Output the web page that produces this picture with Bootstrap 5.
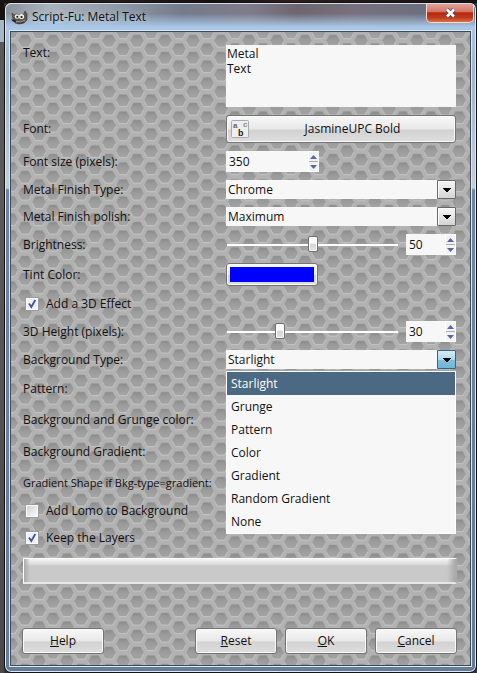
<!DOCTYPE html>
<html lang="en">
<head>
<meta charset="utf-8">
<meta name="viewport" content="width=device-width, initial-scale=1">
<title>Script-Fu: Metal Text</title>
<link href="https://cdn.jsdelivr.net/npm/bootstrap@5.3.0/dist/css/bootstrap.min.css" rel="stylesheet">
<style>
body{font:12px/16px "Open Sans","Noto Sans",sans-serif;color:#111;min-height:100vh;padding:2px 0 0 4px;
 background:linear-gradient(90deg,#1d1412,#281b18 25%,#15100f 45%,#2f1d19 60%,#161010) 0 0/100% 3px no-repeat,
 linear-gradient(#17110f 0 20px,#a9b7c2 20px 42px,#5b5a58 42px 190px,#4b4947) 0 0/4px 100% no-repeat,#333}
.win{border:1px solid #10141a;border-radius:7px;padding:0 5px 6px;
 background:linear-gradient(#a9c4df 0 30px,#a4b6c9 70px,#c3ced9 185px,#6e86a1 187px,#667b94);
 box-shadow:inset 0 0 0 1px #dbe8f2}
.titlebar{height:28px;margin:0 -4px;padding:0 1px 0 5px;border-radius:6px 6px 0 0;
 background:linear-gradient(transparent 35%,#a9c7e7 85%),linear-gradient(90deg,#8b9199,#a9b3bd 9%,#8e99a7 24%,#737b8b 38%,#7f7c89 52%,#6d6670 62%,#77717d 74%,#646d7d 100%);
 border-top:1px solid #d3dde6}
.logo{width:17px;height:15px;margin-top:6px}
.wintitle{font-size:12px;line-height:26px;margin:0 0 0 4px;font-weight:400;text-shadow:0 0 6px #fff9}
.closebtn{width:48px;height:19px;padding:0;border:1px solid #f2d9d4;border-top:0;border-radius:0 0 5px 5px;
 background:linear-gradient(#e2a296,#d07562 45%,#b8270f 48%,#bf3a1c 75%,#dd7146);display:flex;align-items:center;justify-content:center}
.pane{border:1px solid #3c4b5b;outline:1px solid #dce8f2;padding:13px 14px 11px 12px;
 background:#b2b2b2 url("data:image/svg+xml,%3Csvg xmlns='http://www.w3.org/2000/svg' width='28' height='17'%3E%3Cdefs%3E%3ClinearGradient id='g' x2='0' y2='1'%3E%3Cstop stop-color='%238b8b8b'/%3E%3Cstop offset='.4' stop-color='%239a9a9a'/%3E%3Cstop offset='1' stop-color='%23a4a4a4'/%3E%3C/linearGradient%3E%3Cg id='h'%3E%3Cpath d='M-6.5 1.500L-3.700 6.600H3.700L6.500 1.500' fill='none' stroke='%23c4c4c4'/%3E%3Cpath d='M-6.500 0L-3.500-5.600H3.500L6.500 0L3.500 5.600H-3.500Z' fill='url(%23g)' stroke='%239b9b9b' stroke-width='.5'/%3E%3C/g%3E%3C/defs%3E%3Cuse href='%23h' x='14' y='8.500'/%3E%3Cuse href='%23h' x='0' y='0'/%3E%3Cuse href='%23h' x='28' y='0'/%3E%3Cuse href='%23h' x='0' y='17'/%3E%3Cuse href='%23h' x='28' y='17'/%3E%3C/svg%3E") 0 0/28px 17px}
.rowline{display:grid;grid-template-columns:203px minmax(0,1fr);align-items:center;min-height:19px}
.h-text{min-height:62px}.h-font{min-height:28px}.h-spin{min-height:21px}.h-color{min-height:23px}.h-mid{min-height:24px}
.longlabel{font-size:11px;white-space:nowrap}
.tick-row{height:19px;padding-left:3px}
.field{background-color:#f7f7f7;border:0;border-radius:0;color:#111;font:inherit;outline:0;width:100%}
textarea.field{height:62px;line-height:15px;padding:1px;resize:none;display:block}
.gtkbtn{border:1px solid #747474;border-radius:3px;color:#111;font:inherit;padding:0;
 background:linear-gradient(#f8f8f8,#e8e8e8 50%,#d2d2d2 54%,#dedede);box-shadow:inset 0 0 0 1px #fafafa}
.fontbtn{height:28px;display:flex;align-items:center;width:100%}
.spin{display:flex;height:21px;width:50px;flex:none}
.spin.wide{width:93px}
.spin input{min-width:0;padding:0 3px;appearance:textfield}
.spin input::-webkit-inner-spin-button{display:none}
.steps{width:11px;flex:none;display:flex;flex-direction:column;gap:1px;background:#aaa;border:1px solid #fff}
.steps button{flex:1;border:0;background:#f2f2f2;padding:0;display:flex;align-items:center;justify-content:center}
.combo{height:19px;padding:0 20px 0 2px;appearance:none;background:#f7f7f7 url("data:image/svg+xml,%3Csvg xmlns='http://www.w3.org/2000/svg' width='19' height='19'%3E%3Cdefs%3E%3ClinearGradient id='a' x2='0' y2='1'%3E%3Cstop stop-color='%23f6f6f6'/%3E%3Cstop offset='1' stop-color='%23d3d3d3'/%3E%3C/linearGradient%3E%3C/defs%3E%3Cpath d='M.5.5h18v18H.5z' fill='url(%23a)' stroke='%23686868'/%3E%3Cpath d='M1.500 17.500V1.500h16' fill='none' stroke='%23fff'/%3E%3Cpath d='M6 8h8v1h-1v1h-1v1h-1v1H9v-1H8v-1H7V9H6z'/%3E%3C/svg%3E") right center no-repeat}
.combo.open{background-image:url("data:image/svg+xml,%3Csvg xmlns='http://www.w3.org/2000/svg' width='19' height='19'%3E%3Cdefs%3E%3ClinearGradient id='a' x2='0' y2='1'%3E%3Cstop stop-color='%23d8edf7'/%3E%3Cstop offset='.5' stop-color='%23a9d8ee'/%3E%3Cstop offset='.55' stop-color='%2380bfe0'/%3E%3Cstop offset='1' stop-color='%2370b4d8'/%3E%3C/linearGradient%3E%3C/defs%3E%3Cpath d='M.5.5h18v18H.5z' fill='url(%23a)' stroke='%23356580'/%3E%3Cpath d='M6 8h8v1h-1v1h-1v1h-1v1H9v-1H8v-1H7V9H6z'/%3E%3C/svg%3E")}
.slide{appearance:none;background:none;flex:1;min-width:0;height:18px;margin:0 8px 0 1px}
.slide::-webkit-slider-runnable-track{height:2px;background:#fff}
.slide::-webkit-slider-thumb{appearance:none;width:10px;height:16px;margin-top:-8px;border:1px solid #6f6f6f;border-radius:2px;background:linear-gradient(#fafafa 45%,#d4d4d4 50%,#e4e4e4);box-shadow:inset 0 0 0 1px #fff}
.swatch{appearance:none;width:92px;height:23px;padding:3px}
.swatch::-webkit-color-swatch-wrapper{padding:0}
.swatch::-webkit-color-swatch{border:0;border-radius:0}
.tick{appearance:none;flex:none;width:12px;height:12px;margin:0;border:1px solid #fff;outline:1px solid #999;background:linear-gradient(135deg,#d2d2d2,#fafafa)}
.tick:checked{background:url("data:image/svg+xml,%3Csvg xmlns='http://www.w3.org/2000/svg' viewBox='0 0 10 10'%3E%3Cpath d='M2 4.500L4.300 8L8.300 1' fill='none' stroke='%233f54a0' stroke-width='1.800'/%3E%3C/svg%3E"),#f0f1f8}
.choices{position:absolute;top:21px;left:0;right:0;z-index:5;border:1px solid #fff;border-radius:0;box-shadow:0 -1px #a3a3ab}
.choices button{height:23px;padding:0 4px;border:0;background:#f7f7f7;color:#111;font:inherit;text-align:left}
.choices .active{background:#4b6983;color:#fff}
.bar{height:26px;margin:11px -1px 0 0;border-radius:0;border:1px solid #fff;border-width:1px 2px 2px 1px;border-bottom-color:#e7e7e7;border-right-color:#aaa;
 background:linear-gradient(90deg,#aaa,transparent 6px,transparent calc(100% - 8px),#aaa),linear-gradient(#f4f4f4,#dcdcdc 5px,#c9c9c9 7px)}
.actions{margin:44px -1px 0}
.actions .gtkbtn{width:82px;height:26px}
</style>
</head>
<body>
<main class="win">
 <header class="titlebar d-flex align-items-start">
  <svg class="logo" viewBox="0 0 17 15" aria-hidden="true"><path d="M1 3l2 2 2-1 4 1 4-1 1-3 2 3v6l-3 3-5 1-4-1-2-4z" fill="#5c574c" stroke="#37342e" stroke-width=".6"/><circle cx="6" cy="6.500" r="2.300" fill="#eee"/><circle cx="10.500" cy="6.500" r="2.600" fill="#eee"/><circle cx="6.300" cy="6.800" r="1" fill="#111"/><circle cx="10.500" cy="7" r="1.100" fill="#111"/><path d="M0 9.500l4 .3 2 2.200-4-.5z" fill="#211e1b"/><path d="M4 11l5 1 5-2-2 3-4 1z" fill="#37342e"/><path d="M5 11.700l5 .3 4-2" stroke="#ccc" stroke-width=".7" fill="none"/></svg>
  <h1 class="wintitle flex-grow-1">Script-Fu: Metal Text</h1>
  <button class="closebtn" type="button" aria-label="Close"><svg width="13" height="12" viewBox="0 0 13 12"><path d="M3 2.500l7 7M10 2.500l-7 7" stroke="#4b4f65" stroke-width="4.400"/><path d="M3 2.500l7 7M10 2.500l-7 7" stroke="#fff" stroke-width="2.500"/></svg></button>
 </header>
 <form class="pane">
  <div class="d-grid gap-2">
   <div class="rowline h-text"><label for="txt" class="align-self-start">Text:</label><textarea id="txt" class="field">Metal
Text</textarea></div>
   <div class="rowline h-font"><label for="fnt">Font:</label>
    <button id="fnt" class="gtkbtn fontbtn" type="button"><svg class="ms-1 flex-shrink-0" width="19" height="19" viewBox="0 0 19 19" font-family="Liberation Sans" font-weight="bold" aria-hidden="true"><rect x=".5" y=".5" width="17" height="17" rx="1" fill="#eee" stroke="#aaa"/><text x="2" y="8" font-size="8" fill="#666">a</text><text x="12" y="7" font-size="8" fill="#888">c</text><text x="7" y="16" font-size="9" fill="#222">b</text></svg><span class="flex-grow-1">JasmineUPC Bold</span></button></div>
   <div class="rowline h-spin"><label for="size">Font size (pixels):</label>
    <div class="spin wide"><input id="size" class="field" type="number" value="350"><div class="steps"><button type="button" aria-label="Increase"><svg width="7" height="4"><path d="M0 4L3.500 0 7 4z" fill="#5965a5"/></svg></button><button type="button" aria-label="Decrease"><svg width="7" height="4"><path d="M0 0L3.500 4 7 0z" fill="#5965a5"/></svg></button></div></div></div>
   <div class="rowline"><label for="finish">Metal Finish Type:</label><select id="finish" class="field combo"><option>Chrome</option></select></div>
   <div class="rowline"><label for="polish">Metal Finish polish:</label><select id="polish" class="field combo"><option>Maximum</option></select></div>
   <div class="rowline h-spin"><label for="bright">Brightness:</label>
    <div class="d-flex align-items-center"><input id="bright" class="slide" type="range" value="50"><div class="spin"><input class="field" type="number" value="50" aria-label="Brightness value"><div class="steps"><button type="button" aria-label="Increase"><svg width="7" height="4"><path d="M0 4L3.500 0 7 4z" fill="#5965a5"/></svg></button><button type="button" aria-label="Decrease"><svg width="7" height="4"><path d="M0 0L3.500 4 7 0z" fill="#5965a5"/></svg></button></div></div></div></div>
   <div class="rowline h-color"><label for="tint">Tint Color:</label><input id="tint" class="gtkbtn swatch" type="color" value="#0000ff"></div>
   <div class="tick-row d-flex align-items-center gap-2"><input id="fx" class="tick" type="checkbox" checked><label for="fx">Add a 3D Effect</label></div>
   <div class="rowline h-spin"><label for="depth">3D Height (pixels):</label>
    <div class="d-flex align-items-center"><input id="depth" class="slide" type="range" value="30"><div class="spin"><input class="field" type="number" value="30" aria-label="3D height value"><div class="steps"><button type="button" aria-label="Increase"><svg width="7" height="4"><path d="M0 4L3.500 0 7 4z" fill="#5965a5"/></svg></button><button type="button" aria-label="Decrease"><svg width="7" height="4"><path d="M0 0L3.500 4 7 0z" fill="#5965a5"/></svg></button></div></div></div></div>
   <div class="rowline"><label for="bg">Background Type:</label>
    <div class="position-relative"><select id="bg" class="field combo open d-block"><option>Starlight</option></select>
     <div class="list-group choices" role="listbox" aria-label="Background Type"><button type="button" role="option" class="active" aria-selected="true">Starlight</button><button type="button" role="option">Grunge</button><button type="button" role="option">Pattern</button><button type="button" role="option">Color</button><button type="button" role="option">Gradient</button><button type="button" role="option">Random Gradient</button><button type="button" role="option">None</button></div></div></div>
   <div class="rowline h-color"><span>Pattern:</span></div>
   <div class="rowline h-mid"><span>Background and Grunge color:</span></div>
   <div class="rowline h-mid"><span>Background Gradient:</span></div>
   <div class="rowline h-spin"><span class="longlabel">Gradient Shape if Bkg-type=gradient:</span></div>
   <div class="tick-row d-flex align-items-center gap-2"><input id="lomo" class="tick" type="checkbox"><label for="lomo">Add Lomo to Background</label></div>
   <div class="tick-row d-flex align-items-center gap-2"><input id="keep" class="tick" type="checkbox" checked><label for="keep">Keep the Layers</label></div>
  </div>
  <div class="progress bar" role="progressbar" aria-label="Progress" aria-valuenow="0" aria-valuemin="0" aria-valuemax="100"></div>
  <div class="actions d-flex gap-2"><button class="gtkbtn me-auto" type="button"><u>H</u>elp</button><button class="gtkbtn" type="reset"><u>R</u>eset</button><button class="gtkbtn" type="button"><u>O</u>K</button><button class="gtkbtn" type="button"><u>C</u>ancel</button></div>
 </form>
</main>
<script src="https://cdn.jsdelivr.net/npm/bootstrap@5.3.0/dist/js/bootstrap.bundle.min.js"></script>
</body>
</html>
